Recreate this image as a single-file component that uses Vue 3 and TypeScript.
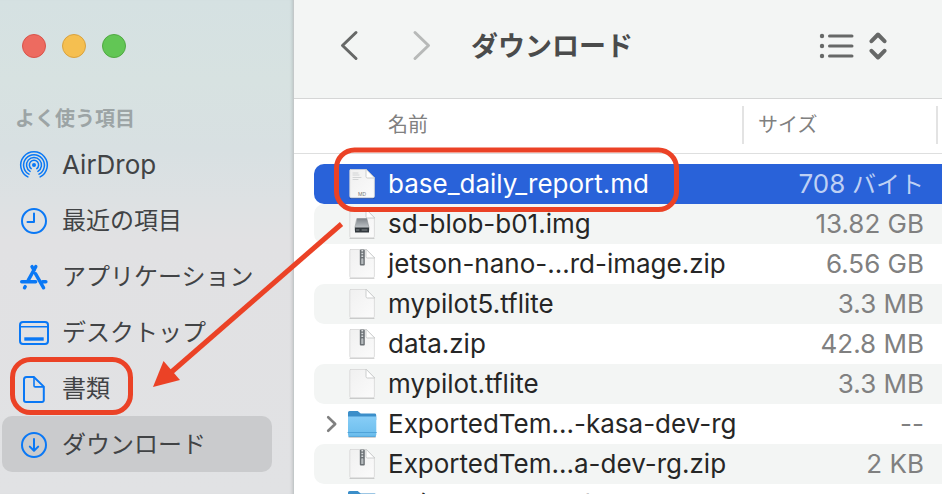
<script setup lang="ts">
import { ref } from 'vue'

type FileKind = 'md' | 'disk' | 'zip' | 'plain' | 'folder'

interface Place {
  id: string
  label: string
}

interface FileRow {
  name: string
  size: string
  unit?: string
  kind: FileKind
}

const places: Place[] = [
  { id: 'airdrop', label: 'AirDrop' },
  { id: 'recents', label: '最近の項目' },
  { id: 'apps', label: 'アプリケーション' },
  { id: 'desktop', label: 'デスクトップ' },
  { id: 'documents', label: '書類' },
  { id: 'downloads', label: 'ダウンロード' },
]

const files: FileRow[] = [
  { name: 'base_daily_report.md', size: '708', unit: 'バイト', kind: 'md' },
  { name: 'sd-blob-b01.img', size: '13.82 GB', kind: 'disk' },
  { name: 'jetson-nano-...rd-image.zip', size: '6.56 GB', kind: 'zip' },
  { name: 'mypilot5.tflite', size: '3.3 MB', kind: 'plain' },
  { name: 'data.zip', size: '42.8 MB', kind: 'zip' },
  { name: 'mypilot.tflite', size: '3.3 MB', kind: 'plain' },
  { name: 'ExportedTem...-kasa-dev-rg', size: '--', kind: 'folder' },
  { name: 'ExportedTem...a-dev-rg.zip', size: '2 KB', kind: 'zip' },
  { name: 'スクリーンショット', size: '--', kind: 'folder' },
]

const currentPlace = ref('downloads')
const selectedFile = ref(0)

const isJapanese = (text: string): boolean => /[^\x00-\x7f]/.test(text)
</script>

<template>
  <div class="window">
    <aside class="sidebar">
      <div class="lights">
        <button class="light red" type="button" aria-label="閉じる"></button>
        <button class="light yellow" type="button" aria-label="しまう"></button>
        <button class="light green" type="button" aria-label="拡大"></button>
      </div>
      <h2 class="section">よく使う項目</h2>
      <nav class="places">
        <a
          v-for="place in places"
          :key="place.id"
          href="#"
          class="place"
          :class="{ current: place.id === currentPlace }"
          @click.prevent="currentPlace = place.id"
        >
          <svg class="place-icon" viewBox="0 0 32 32" aria-hidden="true">
            <g v-if="place.id === 'airdrop'" stroke-width="1.5">
              <circle cx="16" cy="16" r="2" fill="currentColor" stroke="none" />
              <path d="M13.2 19.6A4.6 4.6 0 1 1 18.8 19.6" />
              <path d="M12.1 22.4A7.500 7.500 0 1 1 19.900 22.400" />
              <path d="M11 25.200A10.400 10.400 0 1 1 21 25.200" />
              <path d="M9.900 27.900A13.300 13.300 0 1 1 22.100 27.900" />
            </g>
            <g v-else-if="place.id === 'recents'" stroke-width="2">
              <circle cx="16" cy="16" r="12" />
              <path d="M16 8.5V17H9.5" />
            </g>
            <g v-else-if="place.id === 'apps'" stroke-width="3.4">
              <path d="M17.800 5.600 10.200 19.400M14 5.600l2.200 3.800M17.600 12.800l8 14M3.700 20.800h14M24.500 20.800h3.400M7.200 25.600l-.7 1.200" />
            </g>
            <g v-else-if="place.id === 'desktop'" stroke-width="2">
              <rect x="2" y="5" width="28" height="22" rx="3" />
              <path d="M2 9.7h28" stroke-width="1.6" />
              <path d="M8 22h16" stroke-width="3.4" stroke-linecap="square" />
            </g>
            <g v-else-if="place.id === 'documents'" stroke-width="2">
              <path d="M8.5 4h7.3L25.8 13.6V27.2a1.8 1.8 0 0 1-1.8 1.8H8a2 2 0 0 1-2-2V6.5A2.5 2.5 0 0 1 8.5 4Z" />
              <path d="M16 4.4v8.3a1.2 1.2 0 0 0 1.2 1.2h8.2" stroke-width="1.6" />
            </g>
            <g v-else stroke-width="2">
              <circle cx="16" cy="16" r="12" />
              <path d="M16 10v11.4M11.8 17.6l4.2 4.2 4.2-4.2" />
            </g>
          </svg>
          <span :class="{ ja: isJapanese(place.label) }">{{ place.label }}</span>
        </a>
      </nav>
    </aside>

    <main class="content">
      <header class="toolbar">
        <button class="tool" type="button" aria-label="戻る">
          <svg width="20" height="32" viewBox="0 0 20 32" aria-hidden="true"><path d="M17 3.5 3.5 16.5 17 29.5" /></svg>
        </button>
        <button class="tool forward" type="button" aria-label="進む" disabled>
          <svg width="20" height="32" viewBox="0 0 20 32" aria-hidden="true"><path d="M3 3.5 16.5 16.5 3 29.5" /></svg>
        </button>
        <h1 class="title">ダウンロード</h1>
        <button class="tool view" type="button" aria-label="リスト表示">
          <svg width="68" height="32" viewBox="0 0 68 32" aria-hidden="true">
            <g class="dots">
              <circle cx="3" cy="7" r="2.2" /><circle cx="3" cy="17" r="2.2" /><circle cx="3" cy="27" r="2.2" />
            </g>
            <path d="M10.5 7h22.5M10.5 17h22.5M10.5 27h22.5" />
            <path class="bold" d="M52.5 12.2 59 5.5l6.5 6.7M52.5 21.8 59 28.5l6.5-6.7" />
          </svg>
        </button>
      </header>

      <table class="files">
        <colgroup>
          <col />
          <col class="size-col" />
        </colgroup>
        <thead>
          <tr>
            <th scope="col" class="name-head">名前</th>
            <th scope="col"><div class="size-head">サイズ</div></th>
          </tr>
        </thead>
        <tbody>
          <tr
            v-for="(file, i) in files"
            :key="file.name"
            :class="{ striped: i % 2 === 1, selected: i === selectedFile }"
            @click="selectedFile = i"
          >
            <td class="name-cell">
              <div class="name">
                <button v-if="file.kind === 'folder'" class="disclose" type="button" aria-label="開く">
                  <svg width="12" height="18" viewBox="0 0 12 18" aria-hidden="true"><path d="M2.2 2.2 9.2 9 2.2 15.8" /></svg>
                </button>
                <span v-else class="disclose"></span>
                <svg class="file-icon" viewBox="0 0 32 32" aria-hidden="true">
                  <defs>
                    <linearGradient :id="'paper' + i" x1="0" y1="0" x2="1" y2="1">
                      <stop offset="0" stop-color="#f0f0f0" />
                      <stop offset="1" stop-color="#fbfbfb" />
                    </linearGradient>
                    <linearGradient :id="'folder' + i" x1="0" y1="0" x2="0" y2="1">
                      <stop offset="0" stop-color="#87cdf7" />
                      <stop offset="1" stop-color="#6bbdec" />
                    </linearGradient>
                    <linearGradient :id="'metal' + i" x1="0" y1="0" x2="0" y2="1">
                      <stop offset="0" stop-color="#7d8389" />
                      <stop offset="1" stop-color="#d3d7da" />
                    </linearGradient>
                  </defs>
                  <g v-if="file.kind === 'folder'">
                    <path d="M2 4.5A1.5 1.5 0 0 1 3.5 3h8.2l3 2.6h14A1.5 1.5 0 0 1 30.2 7v5H2Z" fill="#3b8ec9" />
                    <path d="M2 8.6h28.3v18.2a1.6 1.6 0 0 1-1.6 1.6H3.6A1.6 1.6 0 0 1 2 26.8Z" :fill="'url(#folder' + i + ')'" />
                    <path d="M2 24.5h28.3M2.8 28.4h26.6" stroke="#4fa3d8" />
                    <path d="M3 29.5h26.3" stroke="#000" stroke-opacity=".18" />
                  </g>
                  <g v-else>
                    <path d="M4 30.4h24" stroke="#000" stroke-opacity=".2" />
                    <path d="M4.6 1.5H20L28.4 10V28.3a1.4 1.4 0 0 1-1.4 1.4H5.2a1.4 1.4 0 0 1-1.4-1.4V2.3a.8.8 0 0 1 .8-.8Z" :fill="'url(#paper' + i + ')'" stroke="#d6d6d6" stroke-width=".8" />
                    <path d="M20 1.5V8.5A1.5 1.5 0 0 0 21.5 10H28.4Z" fill="#fff" stroke="#c6c8c8" stroke-width=".9" />
                    <g v-if="file.kind === 'zip'">
                      <rect x="13.8" y="1.4" width="5" height="16" rx="1" fill="#6c7276" />
                      <path d="M16.3 2v10" stroke="#dadddf" stroke-width="1.8" stroke-linecap="butt" stroke-dasharray="1.4 1.4" />
                      <rect x="15.2" y="11.5" width="2.2" height="4.5" fill="#b7bcbf" />
                    </g>
                    <g v-else-if="file.kind === 'disk'">
                      <path d="M11.200 10.500h9.600l2.200 9v3h-14v-3Z" :fill="'url(#metal' + i + ')'" stroke="#888d91" stroke-width=".6" />
                      <path d="M9 19.500h14v5h-14Z" fill="#32383d" />
                      <path d="M10.500 22h2.500M16 22h5" stroke="#9ca2a6" stroke-width=".8" />
                    </g>
                    <g v-else-if="file.kind === 'md'">
                      <path d="M7 5h5M7 7h6M7 9.5h8M7 11.5h5" stroke="#c9cbcd" stroke-width=".8" />
                      <text x="16" y="27.5" text-anchor="middle" class="badge">MD</text>
                    </g>
                  </g>
                </svg>
                <span :class="{ ja: isJapanese(file.name) }">{{ file.name }}</span>
              </div>
            </td>
            <td class="size-cell">
              <div class="size">{{ file.size }}<span v-if="file.unit" class="ja">&nbsp;{{ file.unit }}</span></div>
            </td>
          </tr>
        </tbody>
      </table>
    </main>

    <svg class="marks" aria-hidden="true">
      <rect x="336.5" y="150" width="340" height="59.5" rx="18" />
      <rect x="12.5" y="359.5" width="118" height="53" rx="18" />
      <path d="M341.5 224 168 375" />
      <path class="head" d="M153 387 163.5 361 180 380Z" />
    </svg>
  </div>
</template>

<style>
body {
  margin: 0;
}
</style>

<style scoped>
.window {
  position: relative;
  display: flex;
  height: 100vh;
  overflow: hidden;
  background: #fff;
  font-family: Inter, "Noto Sans CJK JP", sans-serif;
  font-size: 26px;
  color: #262626;
}

.ja {
  font-size: 24px;
}

button {
  padding: 0;
  border: 0;
  background: none;
  font: inherit;
}

svg {
  display: block;
  fill: none;
  stroke-linecap: round;
  stroke-linejoin: round;
}

.sidebar {
  flex: none;
  box-sizing: border-box;
  width: 294px;
  border-right: 1px solid #c3c8c9;
  background: linear-gradient(#d5e1e2 0, #d7e2e1 80px, #d8e0e2 150px, #dde1e3 200px, #e1e1e3 240px, #e1e2e4 100%);
  box-shadow: inset -3px 0 3px -2px #00000020;
}

.lights {
  display: flex;
  gap: 16px;
  padding: 34px 22px 0;
}

.light {
  box-sizing: border-box;
  width: 24px;
  height: 24px;
  border: 1px solid;
  border-radius: 50%;
}

.red {
  border-color: #d9534a;
  background: #ed6b60;
}

.yellow {
  border-color: #d9a23e;
  background: #f5bf50;
}

.green {
  border-color: #50a942;
  background: #62c655;
}

.section {
  margin: 46px 0 2px 15px;
  font-size: 20px;
  font-weight: 700;
  line-height: 30px;
  color: #9ca4a5;
}

.places {
  display: flex;
  flex-direction: column;
  padding: 0 21px 0 2px;
}

.place {
  display: flex;
  align-items: center;
  gap: 12px;
  height: 56px;
  padding-left: 16px;
  border-radius: 10px;
  line-height: 38px;
  color: #414345;
  text-decoration: none;
  white-space: nowrap;
}

.place span {
  padding-top: 2px;
}

.current {
  background: #cacbcd;
}

.place-icon {
  width: 32px;
  height: 32px;
  padding-top: 1px;
  color: #0a78f5;
  stroke: currentColor;
}

.content {
  flex: 1;
  min-width: 0;
}

.toolbar {
  display: flex;
  align-items: center;
  box-sizing: border-box;
  height: 99px;
  padding: 0 55px 8px 45px;
  border-bottom: 1px solid #d5d6d6;
  background: #f3f5f4;
}

.tool {
  color: #666867;
}

.tool path {
  stroke: currentColor;
  stroke-width: 3;
}

.tool .bold {
  stroke-width: 4;
}

.forward {
  margin-left: 53px;
  color: #b7b9b8;
}

.title {
  flex: 1;
  margin: 0 0 0 39px;
  padding-top: 4px;
  font-size: 27px;
  font-weight: 700;
  line-height: 40px;
  color: #4a4b4b;
}

.dots {
  fill: currentColor;
}

.files {
  width: 100%;
  table-layout: fixed;
  border-spacing: 0;
}

.size-col {
  width: 200px;
}

.files th {
  height: 52px;
  padding: 0 0 2px;
  border-bottom: 1px solid #dedfdf;
  font-size: 20px;
  font-weight: 400;
  line-height: 30px;
  text-align: left;
  color: #808080;
}

.files .name-head {
  padding-left: 94px;
}

.size-head {
  box-sizing: border-box;
  height: 38px;
  margin-right: 4px;
  padding: 4px 0 4px 14px;
  border: solid #e3e3e3;
  border-width: 0 2px;
}

.files tbody::before {
  content: "";
  display: block;
  height: 10px;
}

.files td {
  height: 40px;
  padding: 0;
  line-height: 40px;
  vertical-align: top;
  white-space: nowrap;
}

.files .name-cell {
  padding-left: 20px;
}

.name {
  display: flex;
  align-items: center;
  height: 40px;
  border-radius: 10px 0 0 10px;
}

.size {
  height: 40px;
  padding-right: 18px;
  text-align: right;
  color: #808080;
}

.striped .name,
.striped .size {
  background: #f3f5f4;
}

.selected .name,
.selected .size {
  background: #2962d9;
  color: #fff;
}

.selected .size {
  color: #bed0f4;
}

.disclose {
  width: 20px;
  margin-left: 12px;
}

.disclose path {
  stroke: #808080;
  stroke-width: 2.6;
}

.file-icon {
  width: 32px;
  height: 32px;
  margin-right: 10px;
}

.badge {
  font-size: 5px;
  fill: #777;
}

.marks {
  position: absolute;
  inset: 0;
  width: 100%;
  height: 100%;
  pointer-events: none;
  stroke: #eb4226;
  stroke-width: 5;
  stroke-linecap: butt;
}

.head {
  fill: #eb4226;
  stroke: none;
}
</style>
